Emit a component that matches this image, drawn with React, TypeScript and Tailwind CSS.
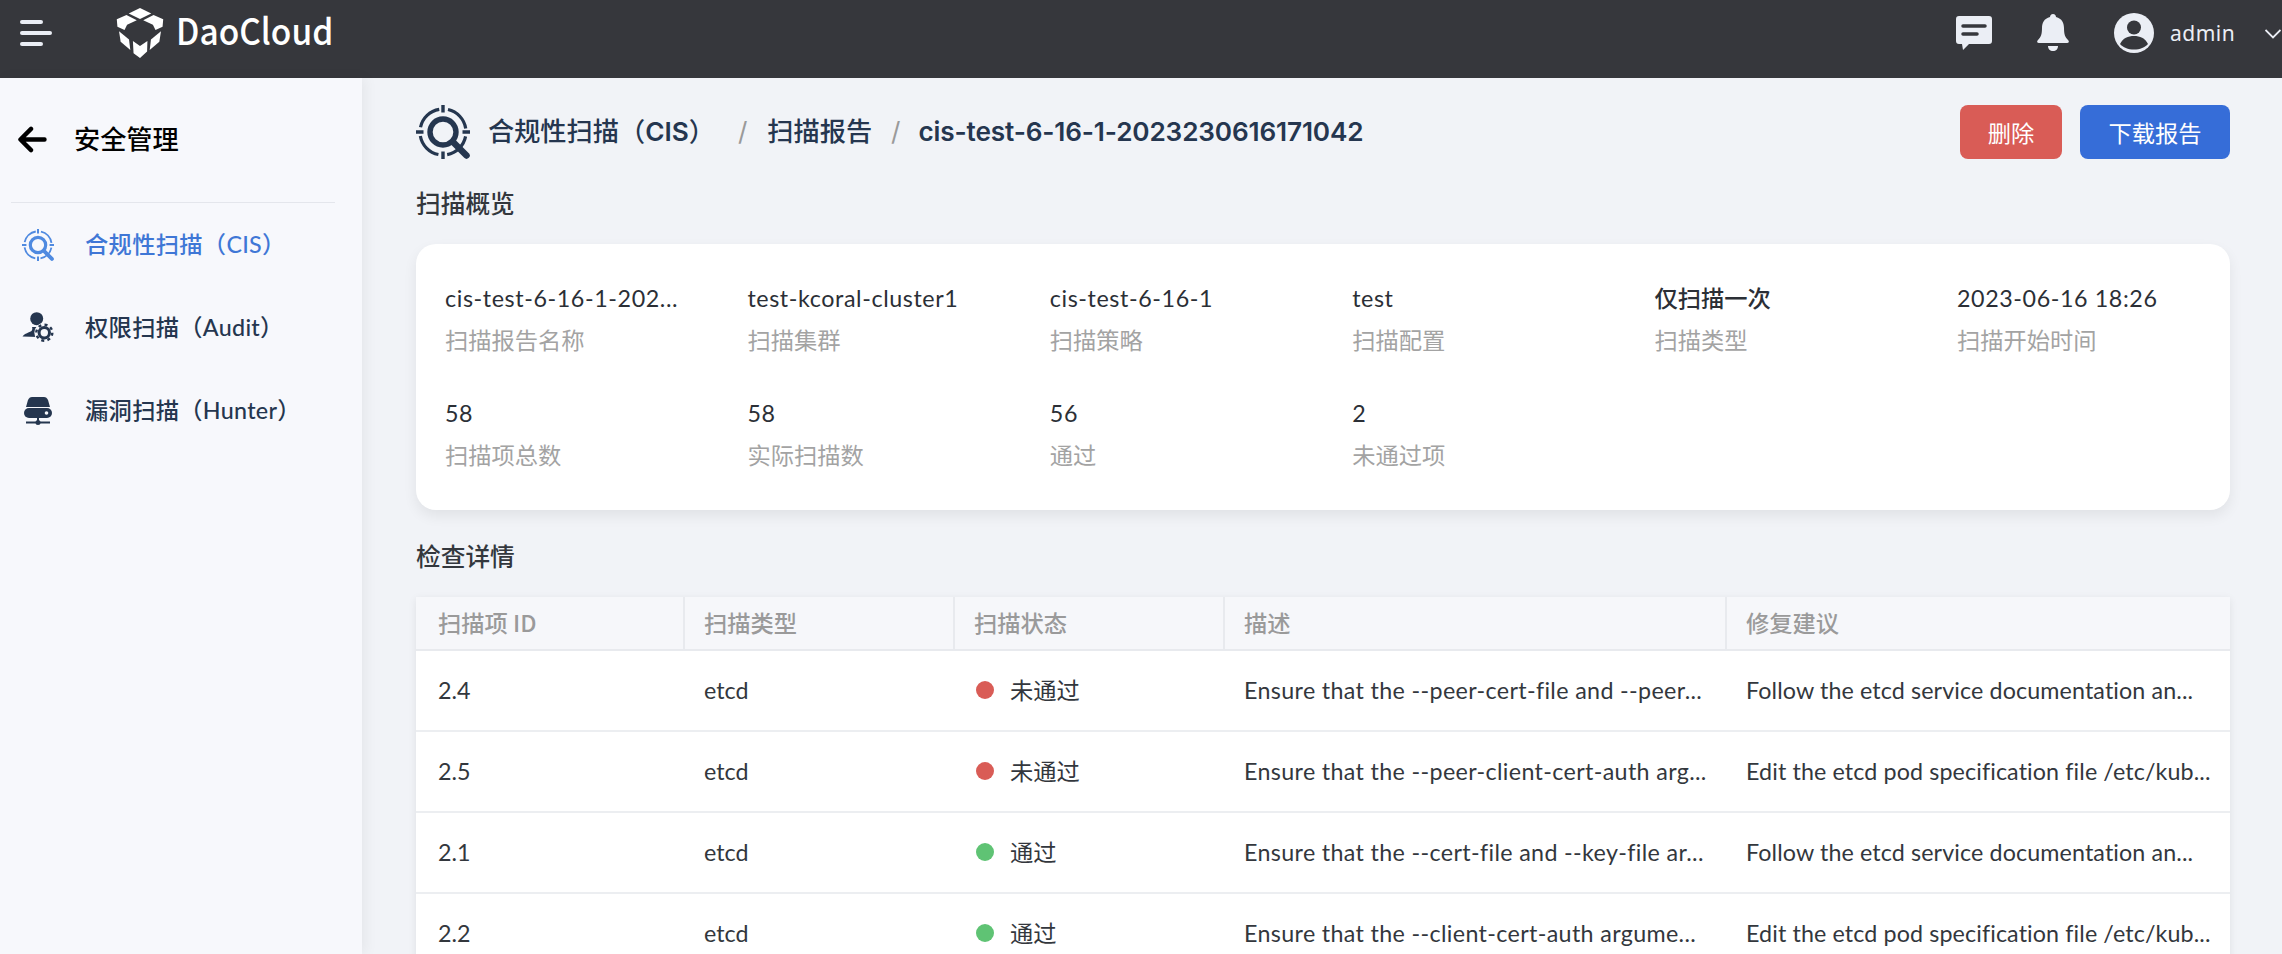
import React from "react";

const cjk = "font-['Noto_Sans_CJK_SC',sans-serif]";
const latin = "font-['Lato','Noto_Sans_CJK_SC',sans-serif]";

function ScanIcon({ className }: { className: string }) {
  return (
    <svg viewBox="0 0 54 54" className={className} fill="none" stroke="currentColor">
      <circle cx="27" cy="27" r="23" strokeWidth="3.200" strokeDasharray="27.1 9" strokeDashoffset="-4.5" />
      <path d="M27 0v7.500M27 46.500V54M0 27h7.500M46.500 27H54" strokeWidth="3.400" />
      <circle cx="27" cy="27" r="13" strokeWidth="5.400" />
      <path d="M37 37l13.500 13.500" strokeWidth="6.500" strokeLinecap="round" />
    </svg>
  );
}

function Logo() {
  return (
    <svg viewBox="18 20 144 155" className="h-[50px] w-[48px]" fill="#fff">
      <path d="M90 20L125 37L90 54L55 37Z" />
      <path d="M18 55L48 42L80 58L50 72L42 88L20 78Z" />
      <path d="M162 55L132 42L100 58L130 72L138 88L160 78Z" />
      <path d="M25 92L56 118L60 150L30 125Z" />
      <path d="M155 92L124 118L120 150L150 125Z" />
      <path d="M68 122L90 138L113 122L112 155L90 175L70 160Z" />
    </svg>
  );
}

function Field({ value, label, strong }: { value: string; label: string; strong?: boolean }) {
  return (
    <div className="min-w-0">
      <div className={`h-[30px] whitespace-nowrap pt-[1px] text-[23.28px] leading-[30px] text-[#2b2f36] ${latin} ${strong ? "font-medium" : "tracking-[0.6px]"}`}>{value}</div>
      <div className="mt-[12px] h-[30px] text-[23.28px] leading-[30px] text-[#a3a3a3]">{label}</div>
    </div>
  );
}

const rows = [
  ["2.4", "etcd", "未通过", "Ensure that the --peer-cert-file and --peer...", "Follow the etcd service documentation an..."],
  ["2.5", "etcd", "未通过", "Ensure that the --peer-client-cert-auth arg...", "Edit the etcd pod specification file /etc/kub..."],
  ["2.1", "etcd", "通过", "Ensure that the --cert-file and --key-file ar...", "Follow the etcd service documentation an..."],
  ["2.2", "etcd", "通过", "Ensure that the --client-cert-auth argume...", "Edit the etcd pod specification file /etc/kub..."],
];

const cols = "grid grid-cols-[269px_270px_270px_502px_1fr]";

export default function App() {
  return (
    <div className={`flex h-[954px] w-[2282px] flex-col overflow-hidden bg-[#f1f3f7] ${cjk}`}>
      <header className="flex h-[78px] shrink-0 items-center bg-[#36373c] pb-[12px] pl-[20px] pr-[1px]">
        <div className="flex w-[32px] flex-col gap-[7px]">
          <div className="h-[4px] w-[23px] rounded-full bg-[#ebeef5]" />
          <div className="h-[4px] w-[32px] rounded-full bg-[#ebeef5]" />
          <div className="h-[4px] w-[23px] rounded-full bg-[#ebeef5]" />
        </div>
        <div className="ml-[64px] flex items-center">
          <Logo />
          <span className="mb-[8px] ml-[12px] origin-left scale-x-[0.93] text-[36px] font-medium leading-none text-white">DaoCloud</span>
        </div>
        <div className="ml-auto flex items-center">
          <svg viewBox="0 0 36 34" className="h-[34px] w-[36px]">
            <path d="M3 0h30a3 3 0 0 1 3 3v22a3 3 0 0 1-3 3H13l-6 6-1-6H3a3 3 0 0 1-3-3V3a3 3 0 0 1 3-3z" fill="#ebeef5" />
            <path d="M7 10h22M7 18h14" stroke="#36373c" strokeWidth="3.500" strokeLinecap="round" />
          </svg>
          <svg viewBox="0 0 34 38" className="ml-[44px] h-[38px] w-[34px]" fill="#ebeef5">
            <path d="M17 0c2 0 3 1.500 3 3 6 1.500 8 6 8 11 0 6 1 9 4 12 1.500 1.500 1 3-1 3H3c-2 0-2.500-1.500-1-3 3-3 4-6 4-12 0-5 2-9.500 8-11 0-1.500 1-3 3-3z" />
            <path d="M12 32h10c0 3-2 5-5 5s-5-2-5-5z" />
          </svg>
          <svg viewBox="0 0 40 40" className="ml-[44px] h-[40px] w-[40px]">
            <circle cx="20" cy="20" r="20" fill="#ebeef5" />
            <circle cx="20" cy="14.500" r="7" fill="#36373c" />
            <path d="M6 31c3-6 8-8 14-8s11 2 14 8c-3 3.500-8 5.500-14 5.500S9 34.500 6 31z" fill="#36373c" />
          </svg>
          <span className="ml-[16px] mt-[2px] w-[63px] font-['Noto_Sans',sans-serif] text-[21px] tracking-[0.5px] text-[#ebeef5]">admin</span>
          <svg viewBox="0 0 16 10" className="ml-[32px] mt-[2px] h-[10px] w-[16px]" fill="none" stroke="#ebeef5" strokeWidth="1.800">
            <path d="M0.500 1L8 8.500L15.500 1" />
          </svg>
        </div>
      </header>
      <div className="flex min-h-0 flex-1">
        <aside className="w-[362px] shrink-0 bg-[#f7f8fc] shadow-[4px_0_12px_rgba(0,0,0,0.05)]">
          <div className="ml-[11px] mr-[27px] flex h-[125px] items-center gap-[27px] border-b border-[#e4e6ec] pb-[2px] pl-[6px]">
            <svg viewBox="0 0 30 28" className="h-[27px] w-[30px]" fill="none" stroke="#000" strokeWidth="4.500" strokeLinecap="round" strokeLinejoin="round">
              <path d="M28 14H4M14 3L3 14l11 11" />
            </svg>
            <span className="text-[26.2px] font-medium text-black">安全管理</span>
          </div>
          <nav className="flex flex-col">
            <div className="flex h-[83px] items-center pl-[22px] text-[#3f77d6]">
              <span className="flex w-[32px] justify-center">
                <ScanIcon className="h-[32px] w-[32px] text-[#4f8ae0]" />
              </span>
              <span className={`ml-[31px] text-[23.28px] font-medium tracking-[0.3px] ${latin}`}>合规性扫描（CIS）</span>
            </div>
            <div className="flex h-[83px] items-center pl-[22px] text-[#25364f]">
              <span className="flex w-[32px] justify-center">
                <svg viewBox="0 0 32 31" className="h-[31px] w-[32px]" fill="currentColor">
                  <circle cx="14.700" cy="6.700" r="6.500" />
                  <path d="M0.500 24.500c2-3 7-4 9-5.500 1-1 1-3 .5-4h9c-.5 1 0 2 1 3l-4 7z" />
                  <circle cx="22.300" cy="20.700" r="10" fill="#f7f8fc" />
                  <circle cx="22.300" cy="20.700" r="5.200" fill="none" stroke="currentColor" strokeWidth="3" />
                  <circle cx="22.300" cy="20.700" r="8" fill="none" stroke="currentColor" strokeWidth="2.400" strokeDasharray="3 3.280" />
                </svg>
              </span>
              <span className={`ml-[31px] text-[23.28px] font-medium tracking-[0.3px] ${latin}`}>权限扫描（Audit）</span>
            </div>
            <div className="flex h-[83px] items-center pl-[22px] text-[#25364f]">
              <span className="flex w-[32px] justify-center">
                <svg viewBox="0 0 28 28" className="h-[28px] w-[28px]" fill="currentColor">
                  <path d="M8 0h12c2 0 3 1 4 3l2 7H2l2-7c1-2 2-3 4-3z" />
                  <rect x="0" y="11" width="28" height="10" rx="5" />
                  <circle cx="22.500" cy="16" r="1.800" fill="#f7f8fc" />
                  <path d="M14 21v5M2 25.500h24" stroke="currentColor" strokeWidth="2" />
                  <circle cx="14" cy="25.500" r="2.500" />
                </svg>
              </span>
              <span className={`ml-[31px] text-[23.28px] font-medium tracking-[0.3px] ${latin}`}>漏洞扫描（Hunter）</span>
            </div>
          </nav>
        </aside>
        <main className="min-w-0 flex-1 pl-[54px] pr-[52px]">
          <div className="flex h-[108px] items-center font-['Inter','Noto_Sans_CJK_SC',sans-serif] text-[26.2px] text-[#25364f]">
            <ScanIcon className="h-[54px] w-[54px] text-[#25364f]" />
            <span className="ml-[18px] font-medium">合规性扫描（<span className="font-semibold">CIS</span>）</span>
            <span className="ml-[23px] text-[#9a9a9a]">/</span>
            <span className="ml-[20px] font-medium">扫描报告</span>
            <span className="ml-[19px] text-[#9a9a9a]">/</span>
            <span className="ml-[18px] font-semibold tracking-[-0.15px]">cis-test-6-16-1-2023230616171042</span>
            <button className={`ml-auto h-[54px] w-[102px] rounded-[8px] bg-[#d95c56] text-[23.28px] text-white ${cjk}`}>删除</button>
            <button className={`ml-[18px] h-[54px] w-[150px] rounded-[8px] bg-[#366dd8] text-[23.28px] text-white ${cjk}`}>下载报告</button>
          </div>
          <h2 className="mt-[1px] text-[24.7px] font-medium leading-[30px] text-[#33373d]">扫描概览</h2>
          <section className="mt-[27px] h-[266px] rounded-[20px] bg-white pl-[29px] pt-[38px] shadow-[0_6px_14px_rgba(0,0,0,0.07)]">
            <div className="grid grid-cols-[repeat(6,302.4px)] gap-y-[43px]">
              <Field value="cis-test-6-16-1-202..." label="扫描报告名称" />
              <Field value="test-kcoral-cluster1" label="扫描集群" />
              <Field value="cis-test-6-16-1" label="扫描策略" />
              <Field value="test" label="扫描配置" />
              <Field value="仅扫描一次" label="扫描类型" strong />
              <Field value="2023-06-16 18:26" label="扫描开始时间" />
              <Field value="58" label="扫描项总数" />
              <Field value="58" label="实际扫描数" />
              <Field value="56" label="通过" />
              <Field value="2" label="未通过项" />
            </div>
          </section>
          <h2 className="mt-[30px] text-[24.7px] font-medium leading-[30px] text-[#33373d]">检查详情</h2>
          <section className="mt-[27px] bg-white shadow-[0_2px_8px_rgba(0,0,0,0.08)]">
            <div className={`${cols} h-[54px] border-b-2 border-[#e8eaee] bg-[#f6f7fa] text-[23.28px] font-medium text-[#9a9a9a]`}>
              {["扫描项 ID", "扫描类型", "扫描状态", "描述", "修复建议"].map((h, i) => (
                <div key={h} className={`flex items-center pb-[2px] ${i === 0 ? "pl-[22px]" : "pl-[19px]"} ${i < 4 ? "border-r-2 border-[#e8eaee]" : ""}`}>{h}</div>
              ))}
            </div>
            {rows.map((r) => (
              <div key={r[0]} className={`${cols} h-[81px] border-b-2 border-[#eceef1] text-[23.28px] text-[#33373d] ${latin}`}>
                <div className="flex items-center pb-[1px] pl-[22px]">{r[0]}</div>
                <div className="flex items-center pb-[1px] pl-[19px]">{r[1]}</div>
                <div className="flex items-center pb-[1px] pl-[21px]">
                  <span className={`h-[18px] w-[18px] rounded-full ${r[2] === "通过" ? "bg-[#5fc374]" : "bg-[#d95c56]"}`} />
                  <span className="ml-[16px]">{r[2]}</span>
                </div>
                <div className="flex min-w-0 items-center whitespace-nowrap pb-[1px] pl-[19px] tracking-[0.35px]">{r[3]}</div>
                <div className="flex min-w-0 items-center whitespace-nowrap pb-[1px] pl-[19px] tracking-[0.12px]">{r[4]}</div>
              </div>
            ))}
          </section>
        </main>
      </div>
    </div>
  );
}
